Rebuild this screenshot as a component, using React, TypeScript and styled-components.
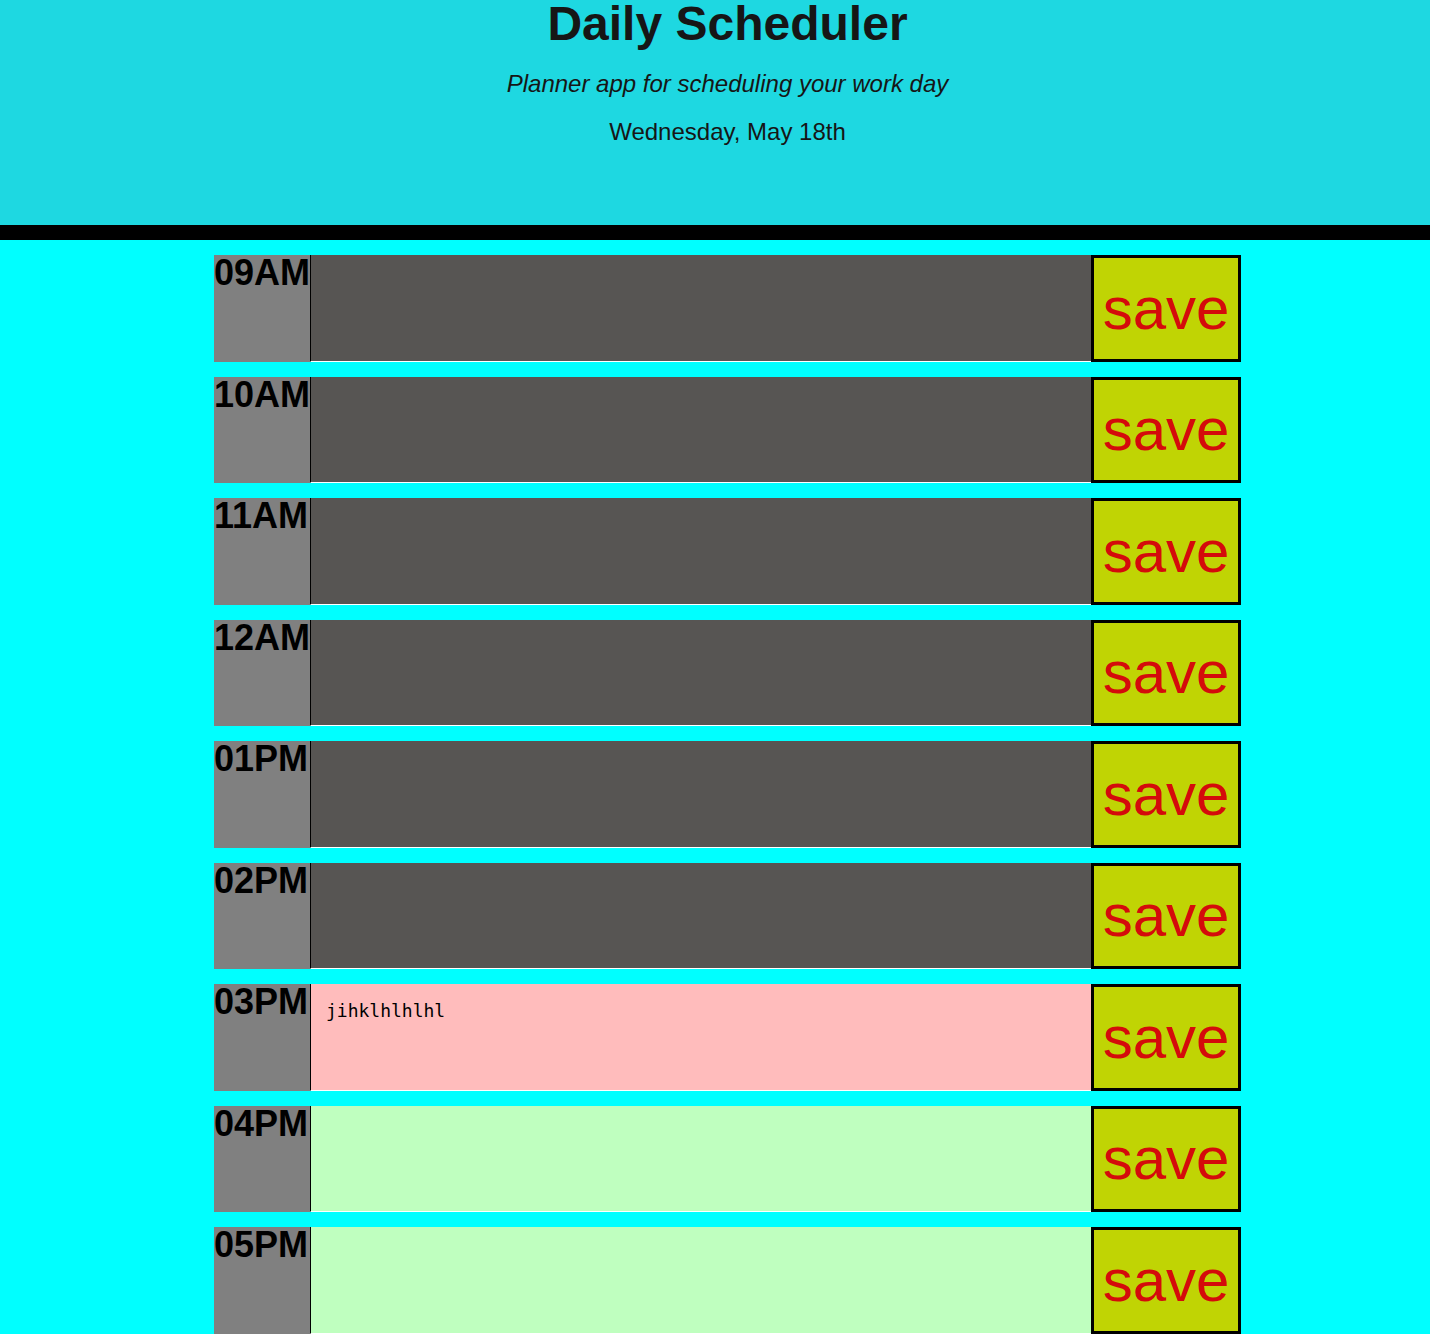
import React from "react";
import styled, { createGlobalStyle } from "styled-components";

const GlobalStyle = createGlobalStyle`
  html, body {
    margin: 0;
    padding: 0;
    background: #00ffff;
    font-family: "Liberation Sans", Arial, sans-serif;
    color: #111;
  }
`;

const Header = styled.header`
  background: #1ed8e1;
  height: 225px;
  border-bottom: 15px solid #000;
  padding-left: 25px;
  text-align: center;
`;

const Title = styled.h1`
  margin: 0;
  font-size: 48px;
  line-height: 48px;
  font-weight: 700;
  color: #161616;
`;

const Lead = styled.p<{ $italic?: boolean }>`
  margin: 24px 0 0;
  font-size: 24px;
  line-height: 24px;
  font-style: ${(p) => (p.$italic ? "italic" : "normal")};
  color: #161616;
`;

const Container = styled.main`
  width: 1027px;
  margin: 0 auto;
  padding: 15px 0 0 25px;
`;

const Row = styled.div`
  display: flex;
  height: 106.5px;
  margin-bottom: 15px;
`;

const Hour = styled.div`
  width: 96px;
  flex: none;
  background: #808080;
  color: #000;
  font-size: 36px;
  line-height: 36px;
  font-weight: 700;
  white-space: nowrap;
`;

type Tense = "past" | "present" | "future";

const tenseBg: Record<Tense, string> = {
  past: "#575553",
  present: "#ffbcbc",
  future: "#bfffbf",
};

const Entry = styled.textarea<{ $tense: Tense }>`
  flex: 1;
  min-width: 0;
  box-sizing: border-box;
  height: 100%;
  margin: 0;
  padding: 16px 15px;
  border: none;
  border-left: 1px solid #000;
  border-bottom: 1px solid #fff;
  background: ${(p) => tenseBg[p.$tense]};
  font-family: "DejaVu Sans Mono", monospace;
  font-size: 18px;
  color: #000;
  resize: none;
  outline: none;
`;

const SaveButton = styled.button`
  width: 150px;
  flex: none;
  box-sizing: border-box;
  height: 100%;
  margin: 0;
  padding: 0;
  border: 3px solid #000;
  background: #c0d404;
  color: #d40b0b;
  font-family: "Liberation Sans", Arial, sans-serif;
  font-size: 60px;
  cursor: pointer;
`;

const hours: { label: string; tense: Tense; text?: string }[] = [
  { label: "09AM", tense: "past" },
  { label: "10AM", tense: "past" },
  { label: "11AM", tense: "past" },
  { label: "12AM", tense: "past" },
  { label: "01PM", tense: "past" },
  { label: "02PM", tense: "past" },
  { label: "03PM", tense: "present", text: "jihklhlhlhl" },
  { label: "04PM", tense: "future" },
  { label: "05PM", tense: "future" },
];

export default function App() {
  return (
    <>
      <GlobalStyle />
      <Header>
        <Title>Daily Scheduler</Title>
        <Lead $italic>Planner app for scheduling your work day</Lead>
        <Lead>Wednesday, May 18th</Lead>
      </Header>
      <Container>
        {hours.map((h) => (
          <Row key={h.label}>
            <Hour>{h.label}</Hour>
            <Entry $tense={h.tense} defaultValue={h.text ?? ""} />
            <SaveButton>save</SaveButton>
          </Row>
        ))}
      </Container>
    </>
  );
}
